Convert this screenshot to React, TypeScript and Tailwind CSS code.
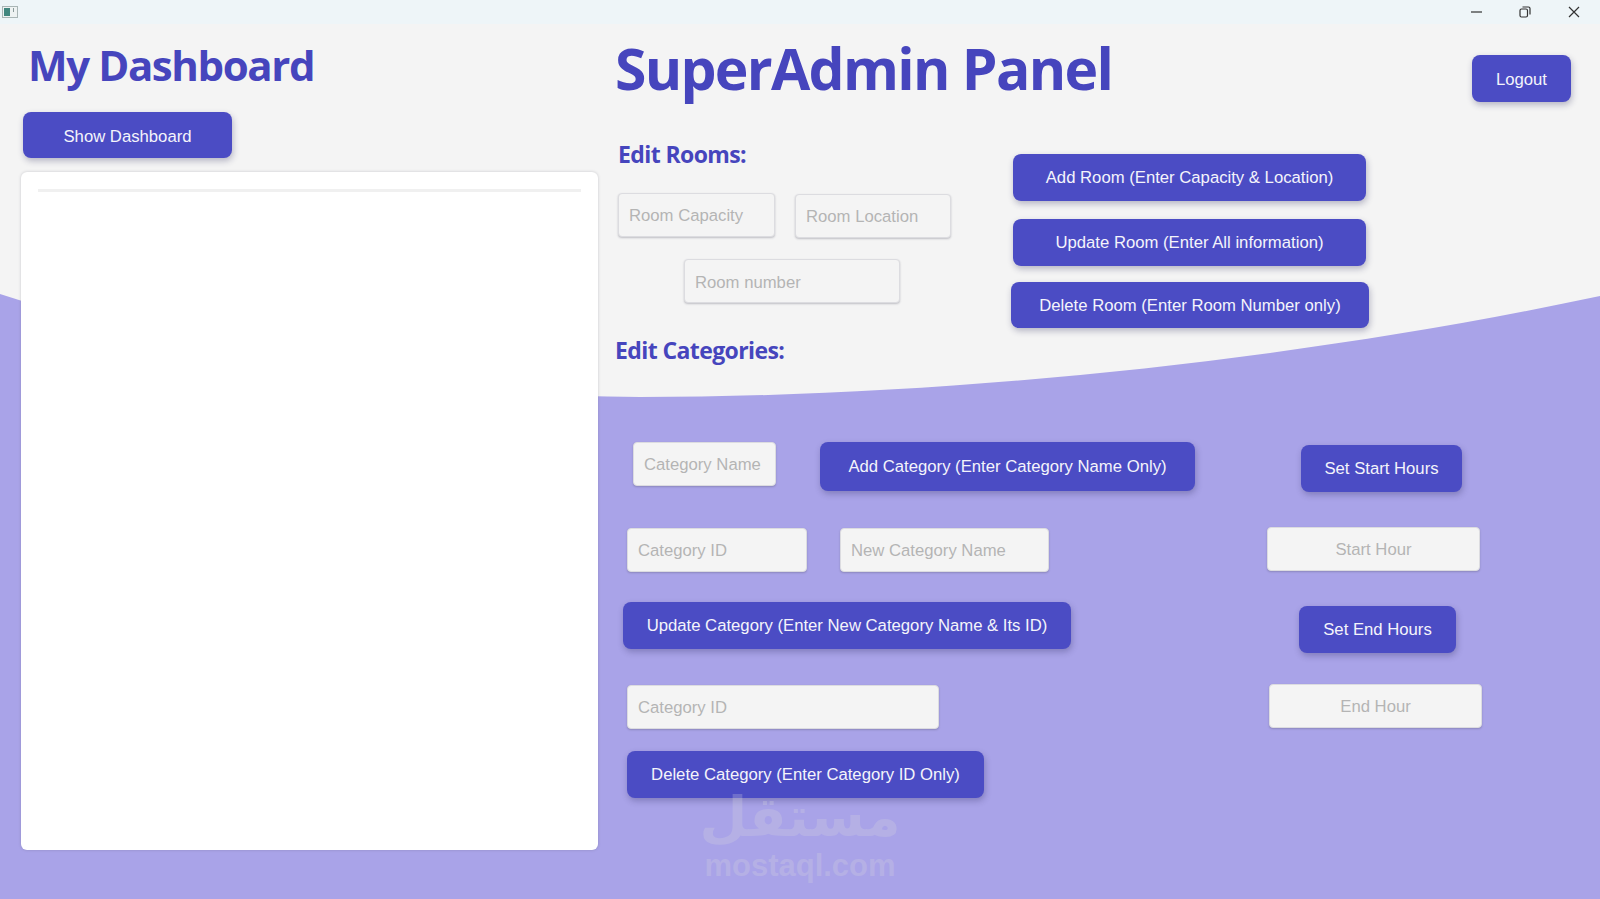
import React from "react";

const Btn = ({ className = "", children }: { className?: string; children: React.ReactNode }) => (
  <button className={`flex items-center justify-center rounded-[8px] bg-[#4b4cc4] pt-[1px] text-[16.7px] text-[#f4f4fb] shadow-[1px_3px_6px_rgba(40,40,90,0.3)] font-['Liberation_Sans',sans-serif] ${className}`}>
    {children}
  </button>
);

const Field = ({ placeholder, className = "" }: { placeholder: string; className?: string }) => (
  <input
    readOnly
    placeholder={placeholder}
    className={`h-[44px] rounded-[4px] border border-[#dcdce0] bg-[#f4f4f4] px-[10px] pt-[2px] text-[16.7px] font-['Liberation_Sans',sans-serif] shadow-[0_1px_2px_rgba(70,70,90,0.3)] outline-none placeholder:text-[#b4b4b4] ${className}`}
  />
);

const H2 = ({ className = "", children }: { className?: string; children: React.ReactNode }) => (
  <h2 className={`flex h-[34px] items-center text-[23px] font-bold tracking-[-0.6px] text-[#4645bd] font-['Open_Sans',sans-serif] ${className}`}>
    {children}
  </h2>
);

export default function App() {
  return (
    <div className="relative flex h-[899px] w-full flex-col overflow-hidden bg-[#f4f4f4]">
      <svg className="absolute inset-0 h-[899px] w-[1600px]" viewBox="0 0 1600 899">
        <path d="M0 294 C200 360 430 397 640 397 C950 397 1300 360 1600 296 L1600 899 L0 899 Z" fill="#a9a3e8" />
      </svg>

      {/* title bar */}
      <div className="relative flex h-[24px] shrink-0 items-center bg-[#eef5f8]">
        <svg width="16" height="12" viewBox="0 0 16 12" className="ml-[2px]">
          <rect x="0.5" y="0.5" width="15" height="11" fill="#eef2f2" stroke="#a9b5b5" />
          <rect x="2" y="2" width="6" height="8" fill="#41877f" />
          <rect x="11" y="2" width="1" height="4" fill="#8a9a9a" />
        </svg>
        <svg width="12" height="2" viewBox="0 0 12 2" className="ml-[1453px]">
          <path d="M0 1H11" stroke="#333" strokeWidth="1.2" />
        </svg>
        <svg width="12" height="12" viewBox="0 0 12 12" className="ml-[36px]">
          <rect x="1" y="3" width="7.5" height="8" rx="1.5" fill="none" stroke="#333" strokeWidth="1.2" />
          <path d="M3.5 1H9.5A1.5 1.500 0 0 1 11 2.500V8.500" fill="none" stroke="#333" strokeWidth="1.2" />
        </svg>
        <svg width="12" height="12" viewBox="0 0 12 12" className="ml-[37px]">
          <path d="M1 1L11 11M11 1L1 11" stroke="#333" strokeWidth="1.2" />
        </svg>
      </div>

      <div className="relative flex flex-1">
        {/* left column */}
        <div className="w-[598px] shrink-0 pl-[21px]">
          <h1 className="ml-[7px] flex h-[80px] items-center text-[42px] font-bold tracking-[-1.4px] text-[#4645bd] font-['Open_Sans',sans-serif]">
            My Dashboard
          </h1>
          <Btn className="ml-[2px] mt-[8px] h-[46px] w-[209px] pt-[3px]">Show Dashboard</Btn>
          <div className="mt-[14px] h-[678px] w-[577px] rounded-[6px] bg-white px-[17px] pt-[17px] shadow-[0_0_3px_rgba(90,90,110,0.3)]">
            <div className="h-[3px] bg-[#f0f0f0]" />
          </div>
        </div>

        {/* right column */}
        <div className="flex flex-1 flex-col">
          <div className="flex h-[113px] items-start">
            <h1 className="ml-[17px] mt-[10px] flex h-[70px] items-center text-[57px] font-bold tracking-[-1.7px] text-[#4645bd] font-['Open_Sans',sans-serif]">
              SuperAdmin Panel
            </h1>
            <Btn className="ml-auto mr-[29px] mt-[31px] h-[47px] w-[99px] pt-[2px]">Logout</Btn>
          </div>

          <div className="flex h-[230px]">
            <div className="w-[415px] shrink-0 pl-[20px]">
              <H2>Edit Rooms:</H2>
              <div className="mt-[22px] flex h-[46px] items-start">
                <Field placeholder="Room Capacity" className="w-[157px]" />
                <Field placeholder="Room Location" className="ml-[20px] mt-[1px] w-[156px]" />
              </div>
              <Field placeholder="Room number" className="ml-[66px] mt-[20px] block w-[216px] pt-[3px]" />
              <H2 className="-ml-[3px] mt-[30px]">Edit Categories:</H2>
            </div>
            <div className="flex flex-col items-start pt-[17px]">
              <Btn className="h-[47px] w-[353px]">Add Room (Enter Capacity &amp; Location)</Btn>
              <Btn className="mt-[18px] h-[47px] w-[353px]">Update Room (Enter All information)</Btn>
              <Btn className="-ml-[2px] mt-[16px] h-[46px] w-[358px]">Delete Room (Enter Room Number only)</Btn>
            </div>
          </div>

          <div className="flex">
            <div className="w-[669px] shrink-0 pt-[75px]">
              <div className="flex items-start">
                <Field placeholder="Category Name" className="ml-[35px] w-[143px]" />
                <Btn className="ml-[44px] h-[49px] w-[375px]">Add Category (Enter Category Name Only)</Btn>
              </div>
              <div className="ml-[29px] mt-[37px] flex">
                <Field placeholder="Category ID" className="w-[180px]" />
                <Field placeholder="New Category Name" className="ml-[33px] w-[209px]" />
              </div>
              <Btn className="ml-[25px] mt-[30px] h-[47px] w-[448px]">Update Category (Enter New Category Name &amp; Its ID)</Btn>
              <Field placeholder="Category ID" className="ml-[29px] mt-[36px] block w-[312px]" />
              <Btn className="ml-[29px] mt-[22px] h-[47px] w-[357px]">Delete Category (Enter Category ID Only)</Btn>
            </div>
            <div className="flex flex-col items-start pt-[78px]">
              <Btn className="ml-[34px] h-[47px] w-[161px]">Set Start Hours</Btn>
              <Field placeholder="Start Hour" className="mt-[35px] w-[213px] text-center" />
              <Btn className="ml-[32px] mt-[35px] h-[47px] w-[157px]">Set End Hours</Btn>
              <Field placeholder="End Hour" className="ml-[2px] mt-[31px] w-[213px] text-center" />
            </div>
          </div>
        </div>
      </div>

      {/* watermark */}
      <div className="pointer-events-none absolute left-[640px] top-[788px] flex w-[320px] flex-col items-center text-[#d9d9e0] opacity-25">
        <span className="h-[59px] text-[55px] font-bold leading-[59px] font-['DejaVu_Sans',sans-serif]">مستقل</span>
        <span className="text-[31px] font-bold leading-[38px] font-['Liberation_Sans',sans-serif]">mostaql.com</span>
      </div>
    </div>
  );
}
